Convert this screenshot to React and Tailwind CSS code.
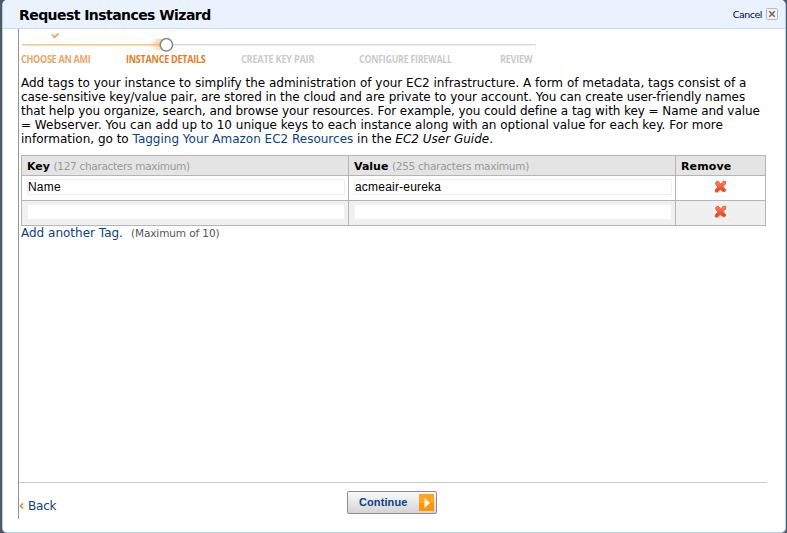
import React from "react";

const verdana = "font-['Verdana','DejaVu_Sans',sans-serif]";

function Step({ className, labelClass, children }) {
  return (
    <div className={className}>
      <span className={`block h-[12px] w-max origin-left whitespace-nowrap font-['Open_Sans',sans-serif] text-[10.5px] leading-[12px] font-bold tracking-[-0.3px] ${labelClass}`}>
        {children}
      </span>
    </div>
  );
}

function Stepper() {
  return (
    <div className="h-[47px] pl-[2px]">
      <svg className="block" width="518" height="24" viewBox="21 29 518 24">
        <defs>
          <linearGradient id="trail" x1="0" x2="1">
            <stop offset="0" stopColor="#f3b273" stopOpacity="0" />
            <stop offset="1" stopColor="#f3b273" stopOpacity="0.75" />
          </linearGradient>
        </defs>
        <path d="M52 34.5l2.5 3 4-4" fill="none" stroke="#e9a468" strokeWidth="1.8" />
        <rect x="22" y="44" width="138" height="1.6" fill="#f6c596" />
        <rect x="172" y="44" width="364" height="1.5" fill="#dadada" />
        <rect x="535.5" y="40" width="0.7" height="10" fill="#f0f0f0" />
        <rect x="151" y="39" width="12" height="3" fill="url(#trail)" />
        <rect x="148" y="42" width="13" height="5" fill="url(#trail)" />
        <rect x="152" y="47" width="12" height="3" fill="url(#trail)" />
        <circle cx="166.4" cy="44.8" r="6.2" fill="#fff" stroke="#858585" strokeWidth="1.5" />
      </svg>
      <div className="flex">
        <Step className="w-[105px]" labelClass="scale-x-[0.857] text-[#e9a468]">CHOOSE AN AMI</Step>
        <Step className="w-[115px]" labelClass="scale-x-[0.862] text-[#e47e20]">INSTANCE DETAILS</Step>
        <Step className="w-[118px]" labelClass="scale-x-[0.879] text-[#cbcbcb]">CREATE KEY PAIR</Step>
        <Step className="w-[141px]" labelClass="scale-x-[0.845] text-[#cbcbcb]">CONFIGURE FIREWALL</Step>
        <Step className="" labelClass="scale-x-[0.868] text-[#cbcbcb]">REVIEW</Step>
      </div>
    </div>
  );
}

function RemoveIcon() {
  return (
    <svg className="block" width="14" height="14" viewBox="0 0 14 14">
      <defs>
        <linearGradient id="cross" x1="0" y1="0" x2="0" y2="1">
          <stop offset="0" stopColor="#ff8a62" />
          <stop offset="1" stopColor="#f5360c" />
        </linearGradient>
      </defs>
      <path
        d="M2 2L4.3 1.2L6.5 4.2L9.5 1L11.8 1.6L11.5 4L8.9 6.7L11.8 9.8L11.2 11.3L9 11.6L6.3 9.4L3.2 12.3L1.2 11.8L1.5 9.6L4 7L1.6 4Z"
        fill="url(#cross)"
        stroke="#d8492c"
        strokeWidth="0.8"
        strokeLinejoin="round"
      />
    </svg>
  );
}

function Field({ value }) {
  return (
    <div className="h-[16px] w-[318px] border border-[#f0f0f0] bg-white font-['Liberation_Sans',sans-serif] text-[12px] leading-[14px] tracking-[0.2px] text-black">
      {value}
    </div>
  );
}

function Row({ name, value, className }) {
  return (
    <div className={`flex h-[25px] border-b border-[#b5b5b5] ${className}`}>
      <div className="w-[327px] border-r border-[#b5b5b5] pt-[3px] pl-[5px]"><Field value={name} /></div>
      <div className="w-[327px] border-r border-[#b5b5b5] pt-[3px] pl-[5px]"><Field value={value} /></div>
      <div className="flex flex-1 justify-center pt-[4px]"><RemoveIcon /></div>
    </div>
  );
}

export default function App() {
  return (
    <div className={`flex h-[533px] w-[787px] overflow-hidden bg-[#505864] px-px pl-[2px] text-black ${verdana}`}>
      <div className="flex h-[533px] w-[784px] flex-col overflow-hidden rounded-[5px] border-x border-b border-[#acd4f0] bg-white">
        <header className="flex h-[29px] shrink-0 items-center justify-between border-b border-[#c0dcf5] bg-[#eaf2fe] pr-[7px] pl-[16px]">
          <h1 className="pt-px text-[14px] leading-[18px] font-bold tracking-[-0.56px] whitespace-nowrap">Request Instances Wizard</h1>
          <div className="flex items-center gap-[4px]">
            <span className="pt-px text-[9.5px] leading-[12px] tracking-[-0.5px] text-[#000050]">Cancel</span>
            <svg className="block" width="12" height="12" viewBox="0 0 12 12">
              <rect x="0.5" y="0.5" width="11" height="11" rx="1" fill="#f3f3f3" stroke="#b9b9b9" />
              <path d="M3.3 3.3l5.4 5.4M8.7 3.3l-5.4 5.4" stroke="#6a6a6a" strokeWidth="1.6" />
            </svg>
          </div>
        </header>
        <main className="ml-[15px] flex h-[490px] flex-col border-l border-[#8f969c]">
          <Stepper />
          <div className="pl-[2px] text-[12px] leading-[14px] whitespace-nowrap">
            <div>Add tags to your instance to simplify the administration of your EC2 infrastructure. A form of metadata, tags consist of a</div>
            <div className="tracking-[-0.05px]">case-sensitive key/value pair, are stored in the cloud and are private to your account. You can create user-friendly names</div>
            <div className="tracking-[-0.067px]">that help you organize, search, and browse your resources. For example, you could define a tag with key = Name and value</div>
            <div>= Webserver. You can add up to 10 unique keys to each instance along with an optional value for each key. For more</div>
            <div>information, go to <a className="text-[#0a3f87]">Tagging Your Amazon EC2 Resources</a> in the <i>EC2 User Guide</i>.</div>
          </div>
          <section className="mt-[9px] ml-[2px] w-[745px] border-t border-l border-[#b5b5b5]">
            <div className="flex h-[20px] border-b border-[#b5b5b5] bg-[#e4e4e4] text-[11px] leading-[20px] whitespace-nowrap">
              <div className="w-[327px] border-r border-[#b5b5b5] pl-[5px]"><b>Key</b> <span className="text-[10.5px] tracking-[-0.3px] text-[#999]">(127 characters maximum)</span></div>
              <div className="w-[327px] border-r border-[#b5b5b5] pl-[5px]"><b>Value</b> <span className="text-[10.5px] tracking-[-0.27px] text-[#999]">(255 characters maximum)</span></div>
              <div className="flex-1 border-r border-[#b5b5b5] pt-px pl-[5px] leading-[19px]"><b className="tracking-[0.15px]">Remove</b></div>
            </div>
            <Row name="Name" value="acmeair-eureka" className="border-r bg-white" />
            <Row name="" value="" className="border-r bg-[#f0f0f0]" />
          </section>
          <div className="pl-[2px] text-[12px] leading-[15px] whitespace-nowrap">
            <a className="text-[#0a3f87]">Add another Tag.</a>
            <span className="ml-[8px] text-[10.5px] tracking-[-0.1px] text-[#555]">(Maximum of 10)</span>
          </div>
          <footer className="mt-auto flex h-[37px] w-[748px] border-t border-[#c8c8c8]">
            <a className="mt-[15px] flex h-[16px] w-[328px] items-center gap-[4px] text-[12px] tracking-[-0.2px] text-[#0a3f87]">
              <svg width="5" height="6" viewBox="0 0 5 6"><path d="M4 .5L1.5 3L4 5.5" fill="none" stroke="#e88234" strokeWidth="1.6" /></svg>
              Back
            </a>
            <button className="mt-[8px] flex h-[23px] w-[90px] items-center justify-between rounded-[2px] border border-[#8c8c8c] bg-linear-to-b from-[#fafafa] to-[#d4d4d4] pr-[2px] pl-[11px] font-['Liberation_Sans',sans-serif] text-[11px] font-bold tracking-[0.1px] text-[#0a4088]">
              Continue
              <svg width="15" height="17" viewBox="0 0 15 17">
                <rect width="15" height="17" fill="#ffa51f" />
                <rect y="9" width="15" height="8" fill="#ff9500" />
                <path d="M5.5 4v10l5.5-5z" fill="#fff" />
              </svg>
            </button>
          </footer>
        </main>
      </div>
    </div>
  );
}
